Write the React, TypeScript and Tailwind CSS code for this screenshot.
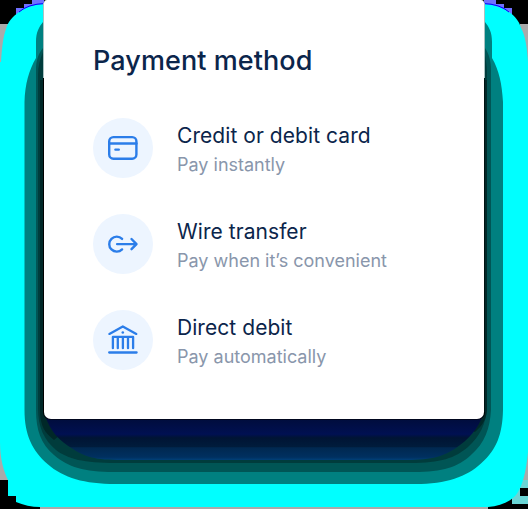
import type { ReactNode } from "react";

function CardIcon() {
  return (
    <svg className="size-8" viewBox="0 0 32 32" fill="none" stroke="#2b7de9" strokeWidth="2.4" strokeLinecap="round">
      <rect x="2.2" y="5.1" width="27.2" height="21.6" rx="4.2" />
      <path d="M2.5 11.5h27M8.4 17.6h3.4" />
    </svg>
  );
}

function TransferIcon() {
  return (
    <svg className="size-8" viewBox="0 0 32 32" fill="none" stroke="#2b7de9" strokeWidth="2.4" strokeLinecap="round" strokeLinejoin="round">
      <path d="M15.1 10.9a7.5 7.500 0 1 0 0 10.500M10.100 16.100h19M24.500 11l5 5.100-5 5.100" />
    </svg>
  );
}

function BankIcon() {
  return (
    <svg className="size-8" viewBox="0 0 32 32" fill="none" stroke="#2b7de9" strokeWidth="2.3" strokeLinecap="round" strokeLinejoin="round">
      <path d="M2.4 9.9 15.800 2.500l13.500 7.400M2.200 28.500h27.400" />
      <path d="M5.900 24.200V12.900h20.200v11.300M10.800 13v11.200M15.900 13v11.200M21 13v11.200" />
      <circle cx="15.800" cy="8.500" r="1.300" fill="#2b7de9" stroke="none" />
    </svg>
  );
}

function Shadow() {
  return (
    <svg className="absolute inset-0 h-[509px] w-[528px]" viewBox="0 0 528 509" aria-hidden="true">
      <defs>
        <linearGradient id="navy" x1="0" y1="419" x2="0" y2="460" gradientUnits="userSpaceOnUse">
          <stop offset="0" stopColor="#000d3c" />
          <stop offset=".37" stopColor="#001052" />
          <stop offset=".46" stopColor="#001434" />
          <stop offset=".68" stopColor="#001c3c" />
          <stop offset=".7" stopColor="#002850" />
          <stop offset=".93" stopColor="#003060" />
          <stop offset="1" stopColor="#004078" />
        </linearGradient>
      </defs>
      <path fill="#000" d="M0 0h528v509H0z" />
      <path fill="#aaa" d="M0 24h8v456H0zM520 24h8v456h-8zM40 504h448v5H40z" />
      <path fill="#7070ff" d="M16 16V8h8V4h8V0h12v10zM512 16V8h-8V4h-8V0h-12v10z" />
      <path fill="#6bd5d5" d="M8 480h8v16H8zM512 480h8v24h-8zM512 496h16v8h-16zM520 480h8v8h-8z" />
      <path
        fill="#0ff"
        d="M45 4C36 4 26 7 19 12 12 17 8 22 6 29 3 37 2 48 1 62H0v380c0 17 4 30 8 38v16h8v6c7 3 16 5 24 5h448c12-1 22-5 28-12 6-8 10-22 12-43V62c-1-16-3-27-7-34-2-7-6-12-12-16-8-5-17-8-26-8z"
      />
      <path fill="none" stroke="#00f" d="M19 12Q28 4 45 3.500M509 12Q500 4 483 3.500" />
      <path fill="#008080" d="M43 22c-4 5-7 10-7 20v16c-7 12-11 26-11.500 44v308c0 25 8 41 23 54 16 14 37 20 68 20h300c31 0 51-7 66-21 15-13 21-29 21.500-53V102c-1-18-4-32-11-44V42c0-10-3-15-7-20z" />
      <path fill="#005555" d="M43 48c-5 6-7 13-7 22v340c0 20 5 34 18 45 14 12 30 17 60 17h300c29 0 44-5 57-17 14-12 19-27 20-45V70c0-9-2-16-6-22z" />
      <path fill="#003c3c" d="M43 52c-3 7-5 14-5 23v333c0 19 6 32 18 42 12 9 27 13 60 13h294c31 0 45-5 58-16 12-11 18-23 19-40V75c0-9-1-16-3-23z" />
      <path fill="#002828" d="M44 80h-4v330c0 16 5 23 14 30l20-16h380l21 8c8-7 12-14 12-24V80z" />
      <path fill="url(#navy)" d="M45 415c5 17 15 26 28 34 12 8 22 11 49 11h284c27 0 38-4 50-12s22-19 27-33z" />
      <path fill="none" stroke="#000" d="M43.500 78v334q0 7 7 7h427q7 0 7-7" />
      <path fill="none" stroke="#000" opacity=".55" d="M484.500 78v334" />
      <path fill="none" stroke="#a9c2c2" d="M43.500 3v75M484.500 3v75" />
    </svg>
  );
}

function Method({ icon, title, detail }: { icon: ReactNode; title: string; detail: string }) {
  return (
    <li className="flex h-[60px] items-center gap-6">
      <span className="flex size-[60px] shrink-0 items-center justify-center rounded-full bg-[#edf5ff]">{icon}</span>
      <div className="whitespace-nowrap">
        <h2 className="text-[21px] leading-[32px] tracking-[0.06px] text-[#0b254b]">{title}</h2>
        <p className="text-[18px] leading-[25px] text-[#8996ab]">{detail}</p>
      </div>
    </li>
  );
}

export default function App() {
  return (
    <main className="relative h-[509px] w-[528px] overflow-hidden px-11 font-['Inter','Liberation_Sans',sans-serif]">
      <Shadow />
      <section className="relative h-[419px] w-[440px] rounded-t-[3px] rounded-b-[7px] bg-white px-[49px] pt-[43px]">
        <h1 className="whitespace-nowrap text-[27px] leading-9 font-medium tracking-[0.08px] text-[#0b254b]">Payment method</h1>
        <ul className="mt-[39px] flex flex-col gap-9">
          <Method icon={<CardIcon />} title="Credit or debit card" detail="Pay instantly" />
          <Method icon={<TransferIcon />} title="Wire transfer" detail="Pay when it’s convenient" />
          <Method icon={<BankIcon />} title="Direct debit" detail="Pay automatically" />
        </ul>
      </section>
    </main>
  );
}
